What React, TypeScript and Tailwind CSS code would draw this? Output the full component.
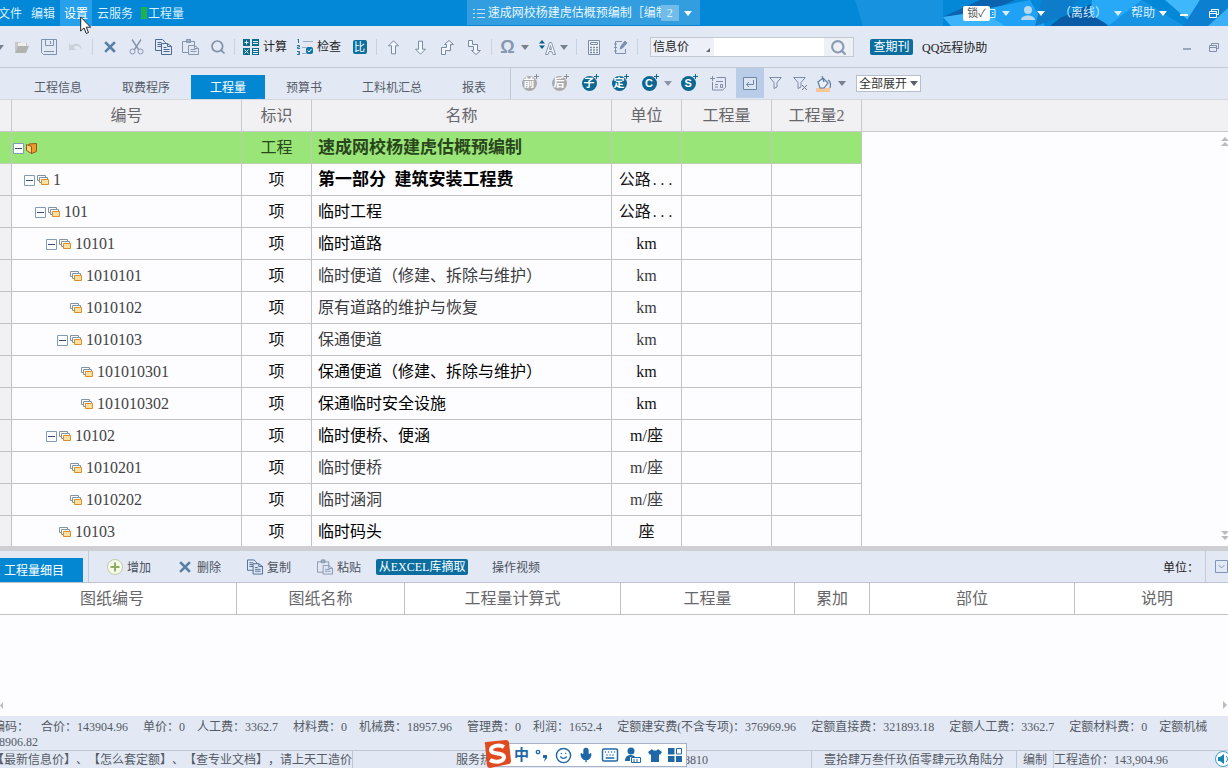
import React from 'react';
import { Search, Smile, Mic, Keyboard } from 'lucide-react';

const MENU_ITEMS = ['文件', '编辑', '设置', '云服务'];

const MAIN_TABS = ['工程信息', '取费程序', '工程量', '预算书', '工料机汇总', '报表'];

interface Row {
  code: string;
  level: number;
  open?: boolean;
  kind: string;
  name: string;
  unit: string;
  cut?: boolean;
  tone?: 'root' | 'bold' | 'dark';
}

const ROWS: Row[] = [
  { code: '', level: 0, open: true, kind: '工程', name: '速成网校杨建虎估概预编制', unit: '', tone: 'root' },
  { code: '1', level: 1, open: true, kind: '项', name: '第一部分\u00a0\u00a0建筑安装工程费', unit: '公路', cut: true, tone: 'bold' },
  { code: '101', level: 2, open: true, kind: '项', name: '临时工程', unit: '公路', cut: true, tone: 'dark' },
  { code: '10101', level: 3, open: true, kind: '项', name: '临时道路', unit: 'km', tone: 'dark' },
  { code: '1010101', level: 4, kind: '项', name: '临时便道（修建、拆除与维护）', unit: 'km' },
  { code: '1010102', level: 4, kind: '项', name: '原有道路的维护与恢复', unit: 'km' },
  { code: '1010103', level: 4, open: true, kind: '项', name: '保通便道', unit: 'km' },
  { code: '101010301', level: 5, kind: '项', name: '保通便道（修建、拆除与维护）', unit: 'km', tone: 'dark' },
  { code: '101010302', level: 5, kind: '项', name: '保通临时安全设施', unit: 'km', tone: 'dark' },
  { code: '10102', level: 3, open: true, kind: '项', name: '临时便桥、便涵', unit: 'm/座', tone: 'dark' },
  { code: '1010201', level: 4, kind: '项', name: '临时便桥', unit: 'm/座' },
  { code: '1010202', level: 4, kind: '项', name: '临时涵洞', unit: 'm/座' },
  { code: '10103', level: 3, kind: '项', name: '临时码头', unit: '座', tone: 'dark' },
];

const DETAIL_COLUMNS = [
  { title: '图纸编号', width: 'w-[249px]' },
  { title: '图纸名称', width: 'w-[168px]' },
  { title: '工程量计算式', width: 'w-[216px]' },
  { title: '工程量', width: 'w-[174px]' },
  { title: '累加', width: 'w-[75px]' },
  { title: '部位', width: 'w-[205px]' },
  { title: '说明', width: '' },
];

const SUMMARY = [
  '编码：',
  '合价：143904.96',
  '单价：0',
  '人工费：3362.7',
  '材料费：0',
  '机械费：18957.96',
  '管理费：0',
  '利润：1652.4',
  '定额建安费(不含专项)：376969.96',
  '定额直接费：321893.18',
  '定额人工费：3362.7',
  '定额材料费：0',
  '定额机械',
];

/* ---------- small drawings ---------- */

const Caret = ({ className = 'text-[#76808f]' }: { className?: string }) => (
  <svg width="8" height="5" viewBox="0 0 8 5" className={className}>
    <path d="M0 0h8L4 5z" fill="currentColor" />
  </svg>
);

const OpenIcon = () => (
  <svg width="16" height="14" viewBox="0 0 16 14">
    <path d="M1 12V2h5l1 1h6v3H5z" fill="#c9c8c8" />
    <path d="M4 6h11l-3 7H1z" fill="#b3b2b3" />
    <path d="M4 3h8v3H4z" fill="#efeff2" />
  </svg>
);

const SaveIcon = () => (
  <svg width="16" height="16" viewBox="0 0 16 16" fill="none" stroke="#7f92ad">
    <path d="M.5.5h15v15h-13l-2-2z" />
    <path d="M4.500.5v6h8v-6M9.500 2v3M3 12.500h10" />
  </svg>
);

const UndoIcon = () => (
  <svg width="16" height="12" viewBox="0 0 16 12">
    <path d="M1 2v7h7L5.500 6.500C8 4 12 4.500 14 9c0-6-6-8-10.500-4.500z" fill="#ccd0d8" />
  </svg>
);

const CrossIcon = () => (
  <svg width="12" height="12" viewBox="0 0 12 12">
    <path d="M2 2l8 8M10 2l-8 8" stroke="#5a7fa6" strokeWidth="2.500" strokeLinecap="square" />
  </svg>
);

const CutIcon = () => (
  <svg width="15" height="16" viewBox="0 0 15 16" fill="none" stroke="#8494ac">
    <path d="M3 .5l6.500 10M12 .5l-6.500 10" strokeWidth="1.400" />
    <circle cx="3.500" cy="12.500" r="2.500" />
    <circle cx="11.500" cy="12.500" r="2.500" />
  </svg>
);

const CopyIcon = () => (
  <svg width="17" height="16" viewBox="0 0 17 16" stroke="#4a6a94" fill="#e2e9f5">
    <path d="M.5.5h7l3 3v8H.5z" />
    <path d="M2.500 3.500h4M2.500 5.500h4M2.500 7.500h4" />
    <path d="M6.500 4.500h6l4 3v8h-10z" />
    <path d="M12.500 4.500v3h4M8.500 8.500h3M8.500 10.500h6M8.500 12.500h6" fill="none" />
  </svg>
);

const PasteIcon = () => (
  <svg width="17" height="16" viewBox="0 0 17 16" stroke="#8495ae" fill="#e2e9f5">
    <path d="M.5 2.500h12v11H.5z" />
    <path d="M4.500.5h4v3h-4z" fill="#9fadc0" />
    <path d="M6.500 6.500h6l4 3v6h-10z" />
    <path d="M12.500 6.500v3h4M8.500 10.500h5M8.500 12.500h6" fill="none" />
  </svg>
);

const CalcIcon = () => (
  <svg width="16" height="16" viewBox="0 0 16 16">
    <path d="M0 0h7v7H0zM9 0h7v7H9zM0 9h7v7H0zM9 9h7v7H9z" fill="#0d6a8d" />
    <path d="M1.500 3.500h4M3.500 1.500v4M10 2.500h5M10 4.500h5M1.500 10.500l4 4M5.500 10.500l-4 4M10 12.500h5M10 10.500h5M10 14.500h5" stroke="#dff3fb" />
  </svg>
);

const CheckIcon = () => (
  <svg width="16" height="16" viewBox="0 0 16 16">
    <path d="M.5 1l1-1v4M0 6.500h2.500v1.500H.5v1.500H3M0 12.500h2.500v3H0M1 14h1.500" fill="none" stroke="#27749c" />
    <path d="M6 2.500h10M5 8.500h4M5 14.500h4" stroke="#9eabc2" />
    <rect x="9" y="8" width="7" height="7" rx="2" fill="#0f75a3" />
    <path d="M10.500 11.500l1.500 1.500 2.500-3" stroke="#fff" fill="none" />
  </svg>
);

const ARROW_PATHS = {
  up: 'M6.500.8l5 5h-3v8h-4v-8h-3z',
  down: 'M6.500 14.200l5-5h-3v-8h-4v8h-3z',
  stepUp: 'M.5 14.500v-7h5v-3h-2l4.500-4 4.500 4h-3v6h-5v4z',
  stepDown: 'M.5.5v6h5v4h-2l4.500 4 4.500-4h-3v-6h-5v-4z',
};

const ArrowIcon = ({ kind }: { kind: keyof typeof ARROW_PATHS }) => (
  <svg width="13" height="15" viewBox="0 0 13 15">
    <path d={ARROW_PATHS[kind]} fill="#f4f7fb" stroke="#768aa8" />
  </svg>
);

const SortFontIcon = () => (
  <svg width="17" height="15" viewBox="0 0 17 15">
    <path d="M0 3.500L3 0l3 3.500zM0 5.500h6L3 9z" fill="#0d5d84" />
    <path d="M6.500 14.500l4-12h2l4 12h-2.500l-1-3h-3l-1 3zM10.500 9.500h2l-1-4z" fill="#f4f7fb" stroke="#8a97ad" />
  </svg>
);

const CalculatorIcon = () => (
  <svg width="12" height="15" viewBox="0 0 12 15">
    <path d="M.5.5h11v14H.5zM2.500 2.500h7v2h-7z" fill="#f1f4f9" stroke="#7c8ba4" />
    <path d="M2 7.500h8M2 10h8M2 12.500h8" stroke="#7c8ba4" strokeDasharray="2 1" strokeWidth="1.500" />
  </svg>
);

const NoteEditIcon = () => (
  <svg width="14" height="15" viewBox="0 0 14 15" fill="none" stroke="#7d91ac">
    <path d="M8 1.500H1.500v12h10V9M0 4h3M0 7.500h3M0 11h3" />
    <path d="M6 9l1-3 4-5 2 2-4.500 5z" fill="#7d91ac" />
  </svg>
);

const PlusBadge = ({ text, gray = false }: { text: string; gray?: boolean }) => (
  <span className="relative block">
    <span
      className={`flex h-[15px] w-[15px] items-center justify-center rounded-full font-['Liberation_Sans','Noto_Sans_CJK_SC',sans-serif] text-[11px] leading-none text-white font-bold ${
        gray ? 'bg-[#a9aaad]' : 'bg-[#0c6792]'
      }`}
    >
      {text}
    </span>
    <svg width="5" height="5" viewBox="0 0 5 5" className="absolute -right-0.5 -top-0.5">
      <path d="M2.500 0v5M0 2.500h5" stroke={gray ? '#8b8d92' : '#0c6792'} />
    </svg>
  </span>
);

const NotePlusIcon = () => (
  <svg width="16" height="15" viewBox="0 0 16 15" fill="none" stroke="#7f8ca3">
    <path d="M6.500 1.500h9v10l-3 2.500H2.500V6M2.500 0v5M0 2.500h5" />
    <path d="M6 5.500h7M5 8.500h3M5 11h3M10.500 8.500h2v3h-2z" />
  </svg>
);

const ReturnIcon = () => (
  <svg width="14" height="13" viewBox="0 0 14 13" fill="none" stroke="#6f86a8">
    <path d="M.5.5h13v12H.5z" fill="#dbe6f3" />
    <path d="M10.500 3v4.500H4M6 5L3.500 7.500 6 10" />
  </svg>
);

const FilterIcon = ({ clear = false }: { clear?: boolean }) => (
  <svg width="14" height="13" viewBox="0 0 14 13" fill="none" stroke="#7c8ca6">
    <path d="M.7.500h11.600L8 5.500v4.500l-3 1.500v-6z" />
    {clear && <path d="M9 8l5 5M14 8l-5 5" stroke="#6b7689" />}
  </svg>
);

const BucketIcon = () => (
  <svg width="16" height="16" viewBox="0 0 16 16">
    <path d="M0 12h14v4H0z" fill="#f7c79c" />
    <path d="M2 6l5-4 5 5-4 5H4zM6 0l2 6M12 4c2 1 3 4 2 8" fill="#eaf0f8" stroke="#5e7c9f" strokeWidth="1.200" />
  </svg>
);

const AddIcon = () => (
  <svg width="16" height="16" viewBox="0 0 16 16">
    <circle cx="8" cy="8" r="7.500" fill="#f7faee" stroke="#c0cd9b" />
    <path d="M8 3.500v9M3.500 8h9" stroke="#8fae5f" strokeWidth="2" />
  </svg>
);

const MinusBox = () => (
  <svg width="11" height="11" viewBox="0 0 11 11">
    <path d="M.5.5h10v10H.5z" fill="#fff" stroke="#7f9db9" />
    <path d="M2 5.500h7" stroke="#35507c" />
  </svg>
);

const LayersIcon = () => (
  <svg width="12" height="10" viewBox="0 0 12 10" fill="#fff" stroke="#8493a0">
    <path d="M.5.5h8v5h-8z" />
    <path d="M2.500 2.500h8v5h-8z" />
    <path d="M4.500 4.500h7v5h-7z" fill="#fbe0a0" stroke="#d98e2b" />
  </svg>
);

const ProjectIcon = () => (
  <svg width="11" height="11" viewBox="0 0 11 11">
    <path d="M3 1l7.500-.5v8l-5 2-3-3z" fill="#ef9a2c" stroke="#94591a" />
    <path d="M.5 1.500l5 2v7l-5-3z" fill="#fbd27c" stroke="#94591a" />
  </svg>
);

const RestoreIcon = ({ className = '' }: { className?: string }) => (
  <svg width="10" height="9" viewBox="0 0 10 9" fill="none" stroke="currentColor" className={className}>
    <path d="M2.500 2V.5h7v5H8" />
    <path d="M.5 2.500h7v6h-7zM1 4.500h6" />
  </svg>
);

const ScrollMark = ({ down = false }: { down?: boolean }) => (
  <svg width="8" height="10" viewBox="0 0 8 10" className={down ? 'rotate-180' : ''}>
    <path d="M4 0l4 4H0zM4 5l4 4H0z" fill="#b9bbc0" />
  </svg>
);

const TitlePattern = () => (
  <svg
    className="absolute inset-y-0 right-0 h-full w-[408px]"
    viewBox="0 0 408 26"
    preserveAspectRatio="none"
    aria-hidden="true"
  >
    <path d="M35 0h88v26H43z" fill="#1792de" />
    <path d="M123 17L160 0h35l-30 13z" fill="#0b62ae" />
    <path d="M123 17l40-6 30 15h-62z" fill="#3cb4fb" />
    <path d="M160 10L210 0l15 26h-40z" fill="#1fa2f5" />
    <path d="M222 0h38l-18 17-27 9z" fill="#0d7ccb" />
    <path d="M240 18L275 2l12 24h-57z" fill="#0a5ba5" />
    <path d="M272 0h50l-32 26-20-12z" fill="#27a9f8" />
    <path d="M322 0l42 26h-76z" fill="#1793e4" />
    <path d="M345 0h35l-12 20z" fill="#3fb7fb" />
    <path d="M380 0h28v26h-45z" fill="#0c7fd0" />
    <path d="M388 26l20-18v18z" fill="#3cb0f7" />
  </svg>
);

/* ---------- building blocks ---------- */

const ToolButton = ({ label, children }: { label: string; children: React.ReactNode }) => (
  <button type="button" aria-label={label} className="flex h-7 w-[27px] shrink-0 items-center justify-center">
    {children}
  </button>
);

const WideToolButton = ({ label, children }: { label: string; children: React.ReactNode }) => (
  <button type="button" aria-label={label} className="flex h-6 w-[30px] shrink-0 items-center justify-center">
    {children}
  </button>
);

const Divider = () => <span className="mx-[3px] h-4 w-px shrink-0 bg-[#cbd2de]" />;

const TitleBar = () => (
  <header className="relative grid h-[26px] shrink-0 grid-cols-[38%_19%_1fr] bg-[#0387d7] text-[#d9f0ff]">
    <TitlePattern />
    <nav className="relative -ml-1.5 flex items-center gap-px">
      {MENU_ITEMS.map((item) => (
        <button
          key={item}
          type="button"
          className={`h-[26px] shrink-0 px-1 pt-px ${item === '设置' ? 'bg-[#27a0ec] text-white' : ''}`}
        >
          {item}
        </button>
      ))}
      <span className="ml-[3px] h-3 w-1.5 bg-[#1fb14c]" />
      <button type="button" className="h-[26px] pt-px">工程量</button>
    </nav>
    <div className="relative flex h-[25px] items-center bg-[#329edf] pl-1.5 pt-px">
      <svg width="12" height="11" viewBox="0 0 12 11" className="mr-[3px] shrink-0">
        <path d="M0 1.500h2M0 5.500h2M0 9.500h2M4 1.500h8M4 5.500h8M4 9.500h8" stroke="#bfe4fb" />
      </svg>
      <span className="w-[173px] shrink-0 overflow-hidden whitespace-nowrap text-[#e9f7ff]">速成网校杨建虎估概预编制［编制</span>
      <span className="flex h-4 w-[18px] shrink-0 items-center justify-center bg-[#72bce9]">2</span>
      <button type="button" aria-label="切换窗口" className="ml-[5px]">
        <Caret className="text-white" />
      </button>
    </div>
    <div className="relative flex items-center justify-end pr-[9px]">
      <span className="flex h-[15px] w-[27px] items-center justify-center rounded-xs bg-white text-[11px] text-[#555]">
        锁✓
      </span>
      <svg width="6" height="9" viewBox="0 0 6 9">
        <path d="M0 .5h5v8H0M2 3.500h1.500M2 5.500h1.500" fill="none" stroke="#e6f5ff" />
      </svg>
      <button type="button" aria-label="锁" className="ml-[6px]">
        <Caret className="text-[#d5efff]" />
      </button>
      <svg width="14" height="14" viewBox="0 0 14 14" className="ml-[11px]">
        <circle cx="7" cy="4" r="4" fill="#b7d8ef" />
        <path d="M0 14c0-6 14-6 14 0z" fill="#b7d8ef" />
      </svg>
      <button type="button" aria-label="用户" className="ml-[2px]">
        <Caret className="text-white" />
      </button>
      <span className="ml-[14px] text-[#c8eaff]">（离线）</span>
      <button type="button" aria-label="状态" className="ml-[7px] mr-[9px]">
        <Caret className="text-[#d5efff]" />
      </button>
      <button type="button" className="flex items-center gap-1">
        帮助
        <Caret className="text-white" />
      </button>
      <button type="button" aria-label="最小化" className="ml-[13px] mt-1 h-0.5 w-2 bg-white" />
      <button type="button" aria-label="还原" className="ml-[21px]">
        <RestoreIcon className="text-white" />
      </button>
    </div>
  </header>
);

const Toolbar = () => (
  <div className="flex h-[42px] shrink-0 items-center border-b border-[#c2c9d4] bg-[#e2e9f5] pt-px">
    <div className="w-2 shrink-0 overflow-hidden">
      <Caret className="-ml-1 text-[#76808f]" />
    </div>
    <ToolButton label="打开"><OpenIcon /></ToolButton>
    <ToolButton label="保存"><SaveIcon /></ToolButton>
    <ToolButton label="撤销"><UndoIcon /></ToolButton>
    <Divider />
    <ToolButton label="删除"><CrossIcon /></ToolButton>
    <ToolButton label="剪切"><CutIcon /></ToolButton>
    <ToolButton label="复制"><CopyIcon /></ToolButton>
    <ToolButton label="粘贴"><PasteIcon /></ToolButton>
    <ToolButton label="查找"><Search size={16} strokeWidth={2.5} className="text-[#7f8fa8]" /></ToolButton>
    <Divider />
    <button type="button" className="flex h-7 shrink-0 items-center gap-1 px-[5px] text-[#222]">
      <CalcIcon />
      计算
    </button>
    <button type="button" className="flex h-7 shrink-0 items-center gap-1 px-[5px] text-[#222]">
      <CheckIcon />
      检查
    </button>
    <ToolButton label="对比">
      <span className="flex h-[14px] w-[14px] items-center justify-center rounded-xs bg-[#0d6f9c] text-[11px] leading-none text-white">
        比
      </span>
    </ToolButton>
    <Divider />
    <ToolButton label="上移"><ArrowIcon kind="up" /></ToolButton>
    <ToolButton label="下移"><ArrowIcon kind="down" /></ToolButton>
    <ToolButton label="升级"><ArrowIcon kind="stepUp" /></ToolButton>
    <ToolButton label="降级"><ArrowIcon kind="stepDown" /></ToolButton>
    <Divider />
    <button type="button" aria-label="特殊符号" className="flex h-7 shrink-0 items-center gap-1.5 px-[5px]">
      <span className="w-[15px] text-center font-['Liberation_Sans',sans-serif] text-lg font-bold text-[#8797b0]">Ω</span>
      <Caret />
    </button>
    <button type="button" aria-label="字体" className="flex h-7 shrink-0 items-center gap-1 px-[5px]">
      <SortFontIcon />
      <Caret />
    </button>
    <Divider />
    <ToolButton label="计算器"><CalculatorIcon /></ToolButton>
    <ToolButton label="记事"><NoteEditIcon /></ToolButton>
    <Divider />
    <form className="ml-[9px] flex h-5 shrink-0 border border-[#c3c8d1] bg-white" onSubmit={(e) => e.preventDefault()}>
      <div className="relative">
        <select aria-label="查询类别" defaultValue="信息价" className="h-full w-[63px] appearance-none bg-[#edf0f8] pl-0.5 text-[#222]">
          <option>信息价</option>
        </select>
        <svg width="4" height="4" viewBox="0 0 4 4" className="absolute bottom-1 right-1">
          <path d="M4 0v4H0z" fill="#666" />
        </svg>
      </div>
      <input type="text" aria-label="查询内容" className="w-[110px] bg-white px-1 outline-none" />
      <button type="submit" aria-label="查询" className="flex w-[29px] items-center justify-center bg-[#edf0f5]">
        <Search size={17} strokeWidth={3} className="text-[#8b9bb3]" />
      </button>
    </form>
    <button type="button" className="ml-4 h-4 w-[43px] shrink-0 rounded-xs bg-[#0b6e9f] leading-4 text-white">查期刊</button>
    <button type="button" className="ml-[9px] shrink-0 pt-px text-[#222]">QQ远程协助</button>
    <div className="ml-auto flex items-center gap-[18px] pr-[9px] text-[#8190a8]">
      <button type="button" aria-label="最小化子窗口" className="mt-1 h-0.5 w-2 bg-[#9aa5b6]" />
      <button type="button" aria-label="还原子窗口"><RestoreIcon /></button>
    </div>
  </div>
);

const TabBar = () => (
  <div className="flex h-[31px] shrink-0 bg-[#e2e9f5]">
    <nav className="flex shrink-0 items-end gap-0.5 border-r border-[#c2c9d4] pl-[15px] pr-[5px]">
      {MAIN_TABS.map((tab) => (
        <button
          key={tab}
          type="button"
          className={`h-6 px-[19px] pt-0.5 ${tab === '工程量' ? 'bg-[#0387d3] text-white' : 'text-[#555b66]'}`}
        >
          {tab}
        </button>
      ))}
    </nav>
    <div className="flex items-center pl-[3px]">
      <WideToolButton label="前插"><PlusBadge text="前" gray /></WideToolButton>
      <WideToolButton label="后插"><PlusBadge text="后" gray /></WideToolButton>
      <WideToolButton label="插入子项"><PlusBadge text="子" /></WideToolButton>
      <WideToolButton label="插入定额"><PlusBadge text="定" /></WideToolButton>
      <WideToolButton label="插入C"><PlusBadge text="C" /></WideToolButton>
      <Caret className="mr-px text-[#8a94a5]" />
      <WideToolButton label="插入S"><PlusBadge text="S" /></WideToolButton>
      <WideToolButton label="批注"><NotePlusIcon /></WideToolButton>
      <button type="button" aria-label="自动换行" className="ml-[3px] flex h-[30px] w-7 items-center justify-center self-start bg-[#b9cde8]">
        <ReturnIcon />
      </button>
      <button type="button" aria-label="筛选" className="flex w-6 justify-center"><FilterIcon /></button>
      <button type="button" aria-label="清除筛选" className="flex w-6 justify-center"><FilterIcon clear /></button>
      <button type="button" aria-label="填充颜色" className="flex items-center gap-1.5 pl-1">
        <BucketIcon />
        <Caret />
      </button>
      <div className="relative ml-2.5">
        <select aria-label="展开级别" defaultValue="全部展开" className="block h-[17px] w-[65px] appearance-none border border-[#b9bfca] bg-white pl-0.5 text-[#333]">
          <option>全部展开</option>
        </select>
        <Caret className="pointer-events-none absolute right-[3px] top-1.5 text-[#5b616c]" />
      </div>
    </div>
  </div>
);

const TONE = {
  root: 'text-[17px] font-bold text-[#29451c]',
  bold: 'text-[17px] font-bold text-black',
  dark: 'text-black',
  normal: 'text-[#3b3b40]',
};

const QuantityRow = ({ row }: { row: Row }) => {
  const root = row.tone === 'root';
  const cell = `h-8 border-b border-r p-0 ${root ? 'border-[#b9cfb0] bg-[#99e577] text-[#29451c]' : 'border-[#c2c1c8]'}`;
  return (
    <tr>
      <td className={`${cell} ${root ? '' : 'bg-[#f1f0f2]'}`} />
      <td className={cell}>
        <div className="flex items-center pt-px" style={{ paddingLeft: 1 + row.level * 11 }}>
          <span className="mr-0.5 w-[11px] shrink-0">
            {row.open && (
              <button type="button" aria-label="折叠" className="block"><MinusBox /></button>
            )}
          </span>
          <span className="mr-1">{root ? <ProjectIcon /> : <LayersIcon />}</span>
          <span className="text-[#444]">{row.code}</span>
        </div>
      </td>
      <td className={`${cell} text-center ${root ? '' : 'text-[#111]'}`}>{row.kind}</td>
      <td className={`${cell} whitespace-nowrap pl-1.5! ${TONE[row.tone ?? 'normal']}`}>{row.name}</td>
      <td className={`${cell} text-center ${row.tone ? 'text-[#111]' : 'text-[#3b3b40]'}`}>
        {row.unit}
        {row.cut && <span className="font-['Liberation_Mono',monospace] text-[13px]">...</span>}
      </td>
      <td className={cell} />
      <td className={cell} />
      <td className="p-0" />
    </tr>
  );
};

const QuantityTable = () => {
  const head = 'h-8 border-b border-r border-[#c9c8ce] p-0 font-normal';
  return (
    <section className="relative min-h-0 flex-[447] overflow-hidden border-t border-[#d3d7de] bg-[#fdfdff]">
      <table className="w-full table-fixed border-separate border-spacing-0 text-base">
        <thead className="bg-[#f1f0f2] text-[#67676c]">
          <tr>
            <th className={`${head} w-3`} />
            <th className={`${head} w-[230px]`}>编号</th>
            <th className={`${head} w-[70px]`}>标识</th>
            <th className={`${head} w-[300px]`}>名称</th>
            <th className={`${head} w-[70px]`}>单位</th>
            <th className={`${head} w-[90px]`}>工程量</th>
            <th className={`${head} w-[90px]`}>工程量2</th>
            <th className="border-b border-[#c9c8ce] p-0" />
          </tr>
        </thead>
        <tbody>
          {ROWS.map((row) => (
            <QuantityRow key={row.code || 'root'} row={row} />
          ))}
        </tbody>
      </table>
      <div className="absolute bottom-1.5 right-0 top-[37px] flex w-[7px] flex-col justify-between overflow-hidden">
        <ScrollMark />
        <ScrollMark down />
      </div>
    </section>
  );
};

const DetailAction = ({ label, children }: { label: string; children: React.ReactNode }) => (
  <button type="button" className="flex shrink-0 items-center gap-1 px-[13px] text-[#4b515c]">
    <span className="flex w-4 justify-center">{children}</span>
    <span className="pt-0.5">{label}</span>
  </button>
);

const DetailPanel = () => (
  <section className="flex flex-[165] flex-col overflow-hidden border-t-[5px] border-[#cfced2] bg-[#fdfdff]">
    <div className="flex h-8 shrink-0 items-center border-b border-[#bfc3ce] bg-[#e2e9f5]">
      <button type="button" className="h-6 shrink-0 self-end bg-[#0387d3] pl-1 pr-[19px] pt-px text-white">工程量细目</button>
      <span className="mx-[5px] h-full w-px bg-[#c6ccd7]" />
      <DetailAction label="增加"><AddIcon /></DetailAction>
      <DetailAction label="删除"><CrossIcon /></DetailAction>
      <DetailAction label="复制"><CopyIcon /></DetailAction>
      <DetailAction label="粘贴"><PasteIcon /></DetailAction>
      <button type="button" className="ml-0.5 h-4 w-[92px] shrink-0 whitespace-nowrap rounded-xs bg-[#0b6e9f] leading-4 text-white">
        从EXCEL库摘取
      </button>
      <button type="button" className="ml-6 shrink-0 pt-0.5 text-[#4b515c]">操作视频</button>
      <span className="ml-auto pt-0.5 text-[#222]">单位：</span>
      <span className="ml-1.5 h-full w-px bg-[#c6ccd7]" />
      <button type="button" aria-label="收起" className="ml-[9px]">
        <svg width="13" height="13" viewBox="0 0 13 13" fill="none" stroke="#7f95b8">
          <path d="M.5.5h12v12H.5zM3.500 5l3 3 3-3" />
        </svg>
      </button>
    </div>
    <table className="-ml-3 w-[calc(100%+24px)] table-fixed border-separate border-spacing-0 bg-white text-base text-[#67676c]">
      <thead>
        <tr>
          {DETAIL_COLUMNS.map((col) => (
            <th key={col.title} className={`h-8 border-b border-r border-[#c2c1c8] p-0 pt-px font-normal ${col.width}`}>
              {col.title}
            </th>
          ))}
        </tr>
      </thead>
    </table>
    <div className="mt-auto flex items-center justify-between pb-[7px]">
      <svg width="3" height="7" viewBox="0 0 3 7"><path d="M3 0v7L0 3.500z" fill="#b9bbc0" /></svg>
      <svg width="6" height="8" viewBox="0 0 6 8"><path d="M1 0v8l4-4z" fill="#b9bbc0" /></svg>
    </div>
  </section>
);

const SummaryBar = () => (
  <div className="h-[34px] shrink-0 overflow-hidden bg-[#e2e9f5] pt-[3px] text-[#555a64]">
    <div className="-ml-[7px] flex gap-3 whitespace-nowrap leading-4">
      {SUMMARY.map((item) => (
        <span key={item} className={item.includes('.') ? 'pr-[3px]' : ''}>{item}</span>
      ))}
    </div>
    <div className="-ml-px leading-[14px]">8906.82</div>
  </div>
);

const ImeBar = () => (
  <div className="absolute -top-2 left-[136px] flex h-6 w-[198px] items-center justify-between border border-[#a8b2c4] bg-white pl-6 pr-1 text-[#1f68a8]">
    <svg width="30" height="28" viewBox="0 0 30 28" className="absolute -left-2 -top-1">
      <path d="M3 4Q2 2 4 2L24 0q2 0 3 2l2 19q0 2-2 3L8 28q-2 0-3-2z" fill="#e04a20" />
      <path d="M22 7C17 4 9 6 9 10c0 5 13 2 13 7 0 5-9 6-14 3" fill="none" stroke="#fff" strokeWidth="4" />
    </svg>
    <button type="button" className="text-[15px] font-bold leading-none">中</button>
    <svg width="13" height="14" viewBox="0 0 13 14">
      <circle cx="3" cy="4" r="1.700" fill="none" stroke="currentColor" strokeWidth="1.300" />
      <path d="M8 7h4v3l-3 4 1-4H8z" fill="currentColor" />
    </svg>
    <Smile size={17} />
    <Mic size={16} fill="currentColor" />
    <Keyboard size={18} />
    <svg width="16" height="16" viewBox="0 0 16 16" fill="currentColor">
      <circle cx="6" cy="4" r="3.500" />
      <path d="M0 14c0-7 8-7 10-4H5v4z" />
      <path d="M6.500 10.500h9v5h-9zM9 12v3M12 12v3" fill="#fff" stroke="currentColor" />
    </svg>
    <svg width="14" height="13" viewBox="0 0 14 13" fill="currentColor">
      <path d="M4 0c1 2 5 2 6 0l4 3-2 3-1-1v8H3V5L2 6 0 3z" />
    </svg>
    <svg width="14" height="14" viewBox="0 0 14 14" fill="currentColor">
      <path d="M0 0h6.500v6.500H0zM0 8h6.500v6H0zM8 8h6v6H8z" />
      <path d="M8.500.5h5v5.500h-5z" fill="none" stroke="currentColor" />
    </svg>
  </div>
);

const StatusBar = () => (
  <footer className="relative flex h-[18px] shrink-0 items-start whitespace-nowrap border-t border-[#c0c7d4] bg-[#e2e9f5] leading-[18px] text-[#555a64]">
    <div className="w-[353px] shrink-0 border-r border-[#c0c7d4]">
      <div className="-ml-2">【最新信息价】、【怎么套定额】、【查专业文档】，请上天工造价</div>
    </div>
    <div className="relative flex flex-1 justify-center self-stretch border-r border-[#c0c7d4]">
      <div className="flex w-[252px] justify-between">
        <span>服务热线</span>
        <span>8810</span>
      </div>
      <ImeBar />
    </div>
    <div className="px-3 border-r border-[#c0c7d4]">壹拾肆万叁仟玖佰零肆元玖角陆分</div>
    <div className="px-1.5 border-r border-[#c0c7d4]">编制</div>
    <div className="w-[161px]">工程造价：143,904.96</div>
    <svg width="13" height="16" viewBox="0 0 13 16">
      <circle cx="8" cy="8" r="7.500" fill="#fff" stroke="#3a9fc4" />
      <path d="M3 6h2l4-3v10L5 10H3z" fill="#1583b4" />
      <path d="M11 5c2 2 2 4 0 6" fill="none" stroke="#1583b4" />
    </svg>
  </footer>
);

export default function App() {
  return (
    <div className="relative flex h-screen flex-col overflow-hidden bg-white font-['Liberation_Serif','Noto_Sans_CJK_SC',serif] text-xs [text-spacing-trim:space-all]">
      <TitleBar />
      <Toolbar />
      <TabBar />
      <QuantityTable />
      <DetailPanel />
      <SummaryBar />
      <StatusBar />
      <svg width="12" height="19" viewBox="0 0 12 19" className="pointer-events-none absolute left-20 top-4">
        <path d="M.7 1v14l3.300-3 2.300 5.500 2.200-1-2.300-5.300h4.500z" fill="#fff" stroke="#222" />
      </svg>
    </div>
  );
}
